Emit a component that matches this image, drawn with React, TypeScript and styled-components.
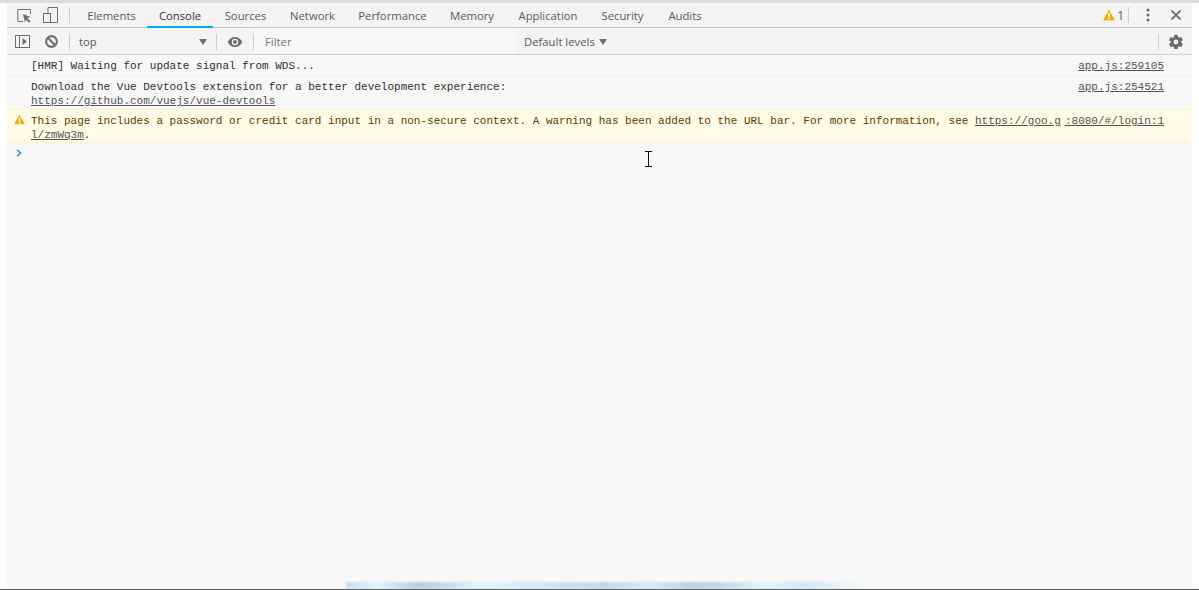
import React from "react";
import styled, { createGlobalStyle } from "styled-components";

const Global = createGlobalStyle`
  html, body { margin: 0; padding: 0; height: 100%; background: #fff; overflow: hidden; }
  #root { height: 100%; }
`;

const Page = styled.div`
  position: relative;
  width: 1199px;
  height: 590px;
  display: flex;
  flex-direction: column;
  background: #fff;
  border-top: 3px solid #dcdcdc;
  box-sizing: border-box;
  overflow: hidden;
  font-family: "Open Sans", "Noto Sans", sans-serif;
`;

const Panel = styled.div`
  flex: 1;
  margin: 0 7px 0 7px;
  display: flex;
  flex-direction: column;
  background: #f8f8f8;
  min-height: 0;
`;

const TabBar = styled.div`
  height: 25px;
  box-sizing: border-box;
  display: flex;
  align-items: stretch;
  background: #f4f4f4;
  border-bottom: 1px solid #cdcdcd;
  flex: none;
`;

const IconSlot = styled.div<{ $w: number }>`
  width: ${(p) => p.$w}px;
  flex: none;
  display: flex;
  align-items: center;
  justify-content: center;
`;

const Sep = styled.div<{ $ml?: number; $mr?: number }>`
  width: 1px;
  height: 16px;
  background: #cfcfcf;
  align-self: center;
  flex: none;
  margin-left: ${(p) => p.$ml ?? 0}px;
  margin-right: ${(p) => p.$mr ?? 0}px;
`;

const Tab = styled.div<{ $active?: boolean; $w: number }>`
  width: ${(p) => p.$w}px;
  flex: none;
  box-sizing: border-box;
  display: flex;
  align-items: center;
  justify-content: center;
  font-size: 11.3px;
  color: ${(p) => (p.$active ? "#333" : "#5a5a5a")};
  border-bottom: 2px solid ${(p) => (p.$active ? "#03a9f4" : "transparent")};
  margin-bottom: -1px;
  padding-top: 1px;
`;

const Spacer = styled.div`
  flex: 1;
`;

const WarnCount = styled.div`
  display: flex;
  align-items: center;
  gap: 2px;
  font-size: 12px;
  color: #5a5a5a;
  margin-right: 4px;
`;

const ToolBar = styled.div`
  height: 27px;
  box-sizing: border-box;
  display: flex;
  align-items: stretch;
  background: #f4f4f4;
  border-bottom: 1px solid #d2d2d2;
  padding-top: 1px;
  flex: none;
`;

const ContextSelect = styled.div`
  width: 146px;
  flex: none;
  box-sizing: border-box;
  padding: 0 9px 0 9px;
  display: flex;
  align-items: center;
  justify-content: space-between;
  font-size: 11.3px;
  color: #5a5a5a;
`;

const Caret = styled.span`
  width: 0;
  height: 0;
  border-left: 4px solid transparent;
  border-right: 4px solid transparent;
  border-top: 6px solid #6e6e6e;
  display: inline-block;
`;

const FilterBox = styled.div`
  width: 261px;
  flex: none;
  display: flex;
  align-items: center;
  padding-left: 11px;
  box-sizing: border-box;
  margin: 0 0 1px 0;
  background: #f8f8f8;
  font-size: 11.3px;
  color: #757575;
`;

const Levels = styled.div`
  display: flex;
  align-items: center;
  gap: 4px;
  padding-left: 9px;
  font-size: 11.3px;
  color: #5a5a5a;
`;

const Log = styled.div`
  flex: 1;
  padding-top: 1px;
  font-family: "Liberation Mono", monospace;
  font-size: 11px;
  line-height: 14px;
  color: #303030;
  position: relative;
`;

const Row = styled.div<{ $warn?: boolean; $pt: number; $pb: number }>`
  display: flex;
  justify-content: space-between;
  padding: ${(p) => p.$pt}px 28px ${(p) => p.$pb}px 24px;
  position: relative;
  border-bottom: 1px solid ${(p) => (p.$warn ? "#fff5c2" : "#f0f0f0")};
  ${(p) =>
    p.$warn
      ? `background: #fffbe6; color: #5c3c00; border-top: 1px solid #fff5c2; margin-top: -1px;`
      : ""}
`;

const Message = styled.div`
  width: 1030px;
  flex: none;
  word-break: break-all;
  white-space: pre-wrap;
`;

const Source = styled.a`
  color: #545454;
  text-decoration: underline;
  white-space: nowrap;
`;

const Link = styled.a`
  color: #545454;
  text-decoration: underline;
`;

const WarnIcon = styled.span`
  position: absolute;
  left: 7px;
  top: 4px;
  display: flex;
`;

const Prompt = styled.div`
  height: 20px;
  padding-left: 8px;
  display: flex;
  align-items: center;
`;

const Cursor = styled.svg`
  position: absolute;
  left: 644px;
  top: 148px;
`;

const Smear = styled.div`
  position: absolute;
  left: 346px;
  width: 520px;
  bottom: 1px;
  height: 7px;
  background: linear-gradient(90deg, #c9dcf0 0, #dff4fb 6%, #bccbe0 14%, #dff4fb 26%, #d0e4f2 40%, #c6d6e8 50%, #d8ecf6 58%, #c0d0e2 66%, #c8d8e8 72%, #dff4fb 80%, #d2e6f2 88%, #f6f9f9 100%);
  filter: blur(1px);
`;

const BottomLine = styled.div`
  position: absolute;
  left: 0;
  right: 0;
  bottom: 0;
  height: 1px;
  background: #555;
`;

const Warn = ({ size = 12 }: { size?: number }) => (
  <svg width={size} height={size} viewBox="0 0 12 12">
    <path d="M6 .8 11.800 11.200H.2Z" fill="#f2ab00" />
    <rect x="5.200" y="4" width="1.600" height="4" fill="#fff" />
    <rect x="5.200" y="8.800" width="1.600" height="1.500" fill="#fff" />
  </svg>
);

const tabs: [string, number][] = [
  ["Elements", 71],
  ["Console", 66],
  ["Sources", 65],
  ["Network", 69],
  ["Performance", 91],
  ["Memory", 68],
  ["Application", 84],
  ["Security", 65],
  ["Audits", 60],
];

export default function App() {
  return (
    <>
      <Global />
      <Page>
        <Panel>
          <TabBar>
            <IconSlot $w={34}>
              <svg width="15" height="15" viewBox="0 0 15 15" fill="none">
                <path d="M6 13.500H.8V1.500H13.500V6" stroke="#6e6e6e" strokeWidth="1" />
                <path d="M6 6l7.500 3-3 1.200 3 3-1.500 1.500-2.900-3-1.200 3Z" fill="#6e6e6e" />
              </svg>
            </IconSlot>
            <IconSlot $w={18}>
              <svg width="15" height="16" viewBox="0 0 15 16" fill="none" stroke="#6e6e6e" strokeWidth="1">
                <path d="M5 6V.5H14.500V15.500H8" />
                <rect x=".5" y="6.500" width="7" height="9" />
              </svg>
            </IconSlot>
            <Sep $ml={10} $mr={6} />
            {tabs.map(([t, w]) => (
              <Tab key={t} $w={w} $active={t === "Console"}>
                {t}
              </Tab>
            ))}
            <Spacer />
            <WarnCount>
              <Warn />
              1
            </WarnCount>
            <Sep />
            <IconSlot $w={38}>
              <svg width="4" height="14" viewBox="0 0 4 14" fill="#6a6a6a">
                <circle cx="2" cy="2" r="1.500" />
                <circle cx="2" cy="7" r="1.500" />
                <circle cx="2" cy="12" r="1.500" />
              </svg>
            </IconSlot>
            <IconSlot $w={18}>
              <svg width="10" height="10" viewBox="0 0 10 10" stroke="#6a6a6a" strokeWidth="1.600">
                <path d="M.5.5l9 9M9.500.5l-9 9" />
              </svg>
            </IconSlot>
            <IconSlot $w={7} />
          </TabBar>
          <ToolBar>
            <IconSlot $w={31}>
              <svg width="15" height="13" viewBox="0 0 15 13" fill="none">
                <rect x=".5" y=".5" width="14" height="12" stroke="#6e6e6e" />
                <path d="M4.500 0v13" stroke="#6e6e6e" />
                <path d="M7.500 3l4.500 3.500-4.500 3.500Z" fill="#6e6e6e" />
              </svg>
            </IconSlot>
            <IconSlot $w={27}>
              <svg width="13" height="13" viewBox="0 0 14 14" fill="none" stroke="#6e6e6e" strokeWidth="2.200">
                <circle cx="7" cy="7" r="5.800" />
                <path d="M3 3l8 8" />
              </svg>
            </IconSlot>
            <Sep $ml={4} />
            <ContextSelect>
              top
              <Caret />
            </ContextSelect>
            <Sep />
            <IconSlot $w={36}>
              <svg width="16" height="10" viewBox="0 0 16 11">
                <path fillRule="evenodd" fill="#6e6e6e" d="M8 0C4.400 0 1.400 2.200 0 5.500 1.400 8.800 4.400 11 8 11s6.600-2.200 8-5.500C14.600 2.200 11.600 0 8 0Zm0 9A3.500 3.500 0 1 1 8 2a3.500 3.500 0 0 1 0 7Z" />
                <circle cx="8" cy="5.500" r="2.100" fill="#6e6e6e" />
              </svg>
            </IconSlot>
            <Sep />
            <FilterBox>Filter</FilterBox>
            <Levels>
              Default levels
              <Caret />
            </Levels>
            <Spacer />
            <Sep />
            <IconSlot $w={33}>
              <svg width="14" height="14" viewBox="2 2 20 20" fill="#6a6a6a">
                <path d="M19.400 13c.04-.33.06-.66.06-1s-.02-.67-.06-1l2.100-1.650a.5.5 0 0 0 .12-.64l-2-3.460a.5.5 0 0 0-.61-.22l-2.490 1a7.300 7.300 0 0 0-1.730-1l-.38-2.650A.49.49 0 0 0 13.920 2h-4a.49.49 0 0 0-.49.420l-.38 2.650a7.600 7.600 0 0 0-1.730 1l-2.490-1a.5.5 0 0 0-.61.220l-2 3.460a.49.49 0 0 0 .12.640L4.440 11c-.04.33-.07.67-.07 1s.03.67.07 1l-2.100 1.650a.5.5 0 0 0-.12.640l2 3.460c.12.220.39.300.61.220l2.490-1c.52.400 1.080.730 1.730 1l.38 2.650c.03.240.24.420.49.420h4c.25 0 .46-.180.49-.420l.38-2.650a7.600 7.600 0 0 0 1.730-1l2.490 1c.22.080.49 0 .61-.220l2-3.460a.5.5 0 0 0-.12-.640ZM11.920 15.500a3.500 3.500 0 1 1 0-7 3.500 3.500 0 0 1 0 7Z" />
              </svg>
            </IconSlot>
          </ToolBar>
          <Log>
            <Row $pt={3} $pb={2}>
              <Message>[HMR] Waiting for update signal from WDS...</Message>
              <Source>app.js:259105</Source>
            </Row>
            <Row $pt={4} $pb={1}>
              <Message>
                Download the Vue Devtools extension for a better development experience:{"\n"}
                <Link>https://github.com/vuejs/vue-devtools</Link>
              </Message>
              <Source>app.js:254521</Source>
            </Row>
            <Row $warn $pt={4} $pb={0}>
              <WarnIcon>
                <Warn size={11} />
              </WarnIcon>
              <Message>
                This page includes a password or credit card input in a non-secure context. A warning has been added to the URL bar. For more information, see <Link>https://goo.gl/zmWq3m</Link>.
              </Message>
              <Source>:8080/#/login:1</Source>
            </Row>
            <Prompt>
              <svg width="8" height="8" viewBox="0 0 8 8" fill="none" stroke="#367cf1" strokeWidth="1.400">
                <path d="M2.200.8l3.400 3.200-3.400 3.200" />
              </svg>
            </Prompt>
          </Log>
        </Panel>
        <Cursor width="9" height="16" viewBox="0 0 9 16" fill="none" stroke="#111" strokeWidth="1">
          <path d="M1 .5h7M1 15.500h7M4.500 .5v15" />
        </Cursor>
        <Smear />
        <BottomLine />
      </Page>
    </>
  );
}
